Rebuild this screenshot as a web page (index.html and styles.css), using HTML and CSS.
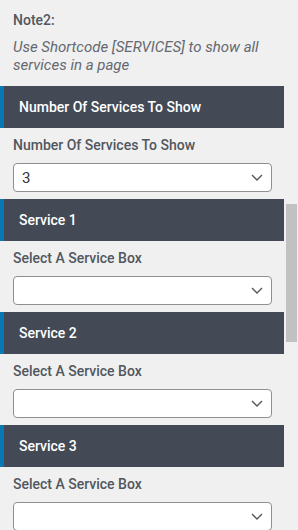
FILE: index.html
```html
<!DOCTYPE html>
<html>
<head>
<meta charset="utf-8">
<link rel="stylesheet" href="styles.css">
</head>
<body>
<div class="frame">
  <div class="content">
    <div class="note">
      <div class="note-title">Note2:</div>
      <div class="note-text">Use Shortcode [SERVICES] to show all services in a page</div>
    </div>

    <div class="section">
      <div class="section-head">Number Of Services To Show</div>
      <div class="field">
        <div class="field-label">Number Of Services To Show</div>
        <div class="select"><span class="select-value">3</span><svg class="chev" width="12" height="7" viewBox="0 0 12 7"><path d="M1 1 L6 6 L11 1" fill="none" stroke="#50575e" stroke-width="1.4"/></svg></div>
      </div>
    </div>

    <div class="section">
      <div class="section-head">Service 1</div>
      <div class="field">
        <div class="field-label">Select A Service Box</div>
        <div class="select"><span class="select-value"></span><svg class="chev" width="12" height="7" viewBox="0 0 12 7"><path d="M1 1 L6 6 L11 1" fill="none" stroke="#50575e" stroke-width="1.4"/></svg></div>
      </div>
    </div>

    <div class="section">
      <div class="section-head">Service 2</div>
      <div class="field">
        <div class="field-label">Select A Service Box</div>
        <div class="select"><span class="select-value"></span><svg class="chev" width="12" height="7" viewBox="0 0 12 7"><path d="M1 1 L6 6 L11 1" fill="none" stroke="#50575e" stroke-width="1.4"/></svg></div>
      </div>
    </div>

    <div class="section">
      <div class="section-head">Service 3</div>
      <div class="field">
        <div class="field-label">Select A Service Box</div>
        <div class="select"><span class="select-value"></span><svg class="chev" width="12" height="7" viewBox="0 0 12 7"><path d="M1 1 L6 6 L11 1" fill="none" stroke="#50575e" stroke-width="1.4"/></svg></div>
      </div>
    </div>
  </div>
  <div class="scrollbar"><div class="thumb"></div></div>
</div>
</body>
</html>
```

FILE: styles.css
```css
html, body {
  margin: 0;
  padding: 0;
  background: #f0f0f1;
  height: 530px;
  overflow: hidden;
}
body {
  font-family: Roboto, "Liberation Sans", sans-serif;
  color: #50575e;
}
.frame {
  display: grid;
  grid-template-columns: 284px 14px;
  width: 298px;
}
.content {
  min-width: 0;
  overflow: hidden;
}
.scrollbar {
  padding-top: 204px;
  padding-left: 2px;
}
.thumb {
  width: 11px;
  height: 138px;
  background: #c1c1c1;
}
.note {
  padding: 11px 0 0 13px;
  height: 86px;
  box-sizing: border-box;
}
.note-title {
  font-size: 14px;
  font-weight: 500;
  line-height: 18px;
  color: #50575e;
}
.note-text {
  margin-top: 9px;
  font-size: 15px;
  font-style: italic;
  line-height: 18px;
  color: #646970;
  width: 265px;
}
.section {
  padding-bottom: 7px;
}
.section-head {
  height: 42px;
  box-sizing: border-box;
  background: #434a56;
  border-left: 4px solid #0a78b4;
  padding-left: 15px;
  display: flex;
  align-items: center;
  color: #fff;
  font-size: 14px;
  font-weight: 500;
}
.field {
  padding: 0 12px 0 13px;
}
.field-label {
  height: 35px;
  box-sizing: border-box;
  padding-top: 8px;
  font-size: 14px;
  font-weight: 500;
  line-height: 18px;
  color: #50575e;
}
.select {
  height: 29px;
  width: 259px;
  box-sizing: border-box;
  background: #fff;
  border: 1px solid #8c8f94;
  border-radius: 4px;
  display: flex;
  align-items: center;
  justify-content: space-between;
  padding: 0 8px 0 8px;
}
.select-value {
  font-size: 15px;
  color: #2c3338;
}
.chev {
  display: block;
}
```
